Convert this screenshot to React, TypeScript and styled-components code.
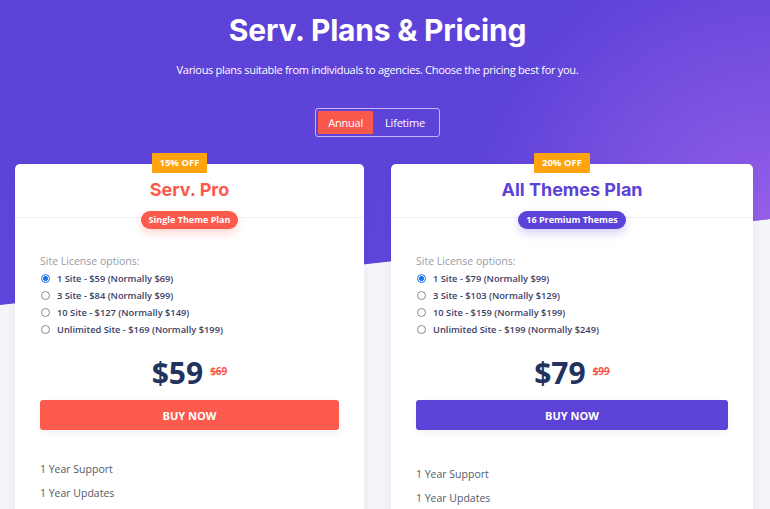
import styled, { createGlobalStyle } from "styled-components";

interface Plan {
  discount: string;
  title: string;
  tag: string;
  accent: string;
  width: number;
  options: string[];
  price: string;
  oldPrice: string;
  featuresOffset: number;
}

const plans: Plan[] = [
  {
    discount: "15% OFF",
    title: "Serv. Pro",
    tag: "Single Theme Plan",
    accent: "#fd5a4e",
    width: 349,
    options: [
      "1 Site - $59 (Normally $69)",
      "3 Site - $84 (Normally $99)",
      "10 Site - $127 (Normally $149)",
      "Unlimited Site - $169 (Normally $199)",
    ],
    price: "$59",
    oldPrice: "$69",
    featuresOffset: 0,
  },
  {
    discount: "20% OFF",
    title: "All Themes Plan",
    tag: "16 Premium Themes",
    accent: "#5c42d6",
    width: 362,
    options: [
      "1 Site - $79 (Normally $99)",
      "3 Site - $103 (Normally $129)",
      "10 Site - $159 (Normally $199)",
      "Unlimited Site - $199 (Normally $249)",
    ],
    price: "$79",
    oldPrice: "$99",
    featuresOffset: 5,
  },
];

const GlobalStyle = createGlobalStyle`
  body {
    margin: 0;
    background: #f4f5f9;
    font-family: "Open Sans", "Liberation Sans", sans-serif;
  }
`;

const App = () => {
  return (
    <>
      <GlobalStyle />
      <Page>
        <Hero>
          <Title>Serv. Plans &amp; Pricing</Title>
          <Subtitle>
            Various plans suitable from individuals to agencies. Choose the
            pricing best for you.
          </Subtitle>
          <Toggle>
            <ToggleOption $active>Annual</ToggleOption>
            <ToggleOption>Lifetime</ToggleOption>
          </Toggle>
        </Hero>
        <Cards>
          {plans.map((plan) => (
            <Card key={plan.title} $width={plan.width}>
              <Discount>{plan.discount}</Discount>
              <CardHead>
                <PlanTitle $color={plan.accent}>{plan.title}</PlanTitle>
              </CardHead>
              <Tag $color={plan.accent}>{plan.tag}</Tag>
              <CardBody>
                <OptionsLabel>Site License options:</OptionsLabel>
                <Options>
                  {plan.options.map((opt, i) => (
                    <Option key={opt}>
                      <Radio $checked={i === 0} />
                      {opt}
                    </Option>
                  ))}
                </Options>
                <PriceRow>
                  <Price>{plan.price}</Price>
                  <OldPrice>{plan.oldPrice}</OldPrice>
                </PriceRow>
                <BuyButton $color={plan.accent}>BUY NOW</BuyButton>
                <Features $offset={plan.featuresOffset}>
                  <li>1 Year Support</li>
                  <li>1 Year Updates</li>
                </Features>
              </CardBody>
            </Card>
          ))}
        </Cards>
      </Page>
    </>
  );
};

const Page = styled.div`
  position: relative;
  height: 509px;
  overflow: hidden;

  &::before {
    content: "";
    position: absolute;
    inset: 0;
    background:
      radial-gradient(circle at 100% 45%, rgba(160, 100, 235, 0.85) 0%, rgba(160, 100, 235, 0) 36%),
      linear-gradient(180deg, #5d42d8 0%, #6047db 100%);
    clip-path: polygon(0 0, 100% 0, 100% 219px, 0 305px);
  }
`;

const Hero = styled.header`
  position: relative;
  display: flex;
  flex-direction: column;
  align-items: center;
  padding: 11px 15px 0 0;
  color: #fff;
`;

const Title = styled.h1`
  margin: 0;
  font-family: "Inter", "Open Sans", sans-serif;
  font-size: 30px;
  font-weight: 700;
  line-height: 38px;
  letter-spacing: -0.2px;
`;

const Subtitle = styled.p`
  margin: 13px 0 0;
  font-size: 11px;
  line-height: 16px;
  letter-spacing: -0.3px;
`;

const Toggle = styled.div`
  display: flex;
  margin-top: 30px;
  padding: 2px;
  border: 1px solid rgba(220, 210, 255, 0.8);
  border-radius: 3px;
`;

const ToggleOption = styled.span<{ $active?: boolean }>`
  display: flex;
  align-items: center;
  justify-content: center;
  height: 23px;
  padding: 0 ${(p) => (p.$active ? "10px" : "12px")};
  font-size: 11px;
  letter-spacing: -0.2px;
  background: ${(p) => (p.$active ? "#f9584d" : "transparent")};
  border-radius: 1px;
`;

const Cards = styled.div`
  position: relative;
  display: flex;
  gap: 27px;
  padding-left: 15px;
  margin-top: 27px;
`;

const Card = styled.section<{ $width: number }>`
  position: relative;
  width: ${(p) => p.$width}px;
  height: 380px;
  background: #fff;
  border-radius: 5px;
  box-shadow: 0 2px 10px rgba(40, 30, 90, 0.06);
  display: flex;
  flex-direction: column;
  align-items: center;
`;

const Discount = styled.span`
  position: absolute;
  top: -11px;
  left: calc(50% - 38px);
  padding: 0 8px;
  height: 20px;
  line-height: 20px;
  background: #ffa30f;
  color: #fff;
  font-size: 9.5px;
  font-weight: 700;
  border-radius: 1px;
`;

const CardHead = styled.div`
  align-self: stretch;
  height: 54px;
  border-bottom: 1px solid #f1f1f5;
  display: flex;
  justify-content: center;
  padding-top: 13px;
  box-sizing: border-box;
`;

const PlanTitle = styled.h2<{ $color: string }>`
  margin: 0;
  font-family: "Inter", "Open Sans", sans-serif;
  font-size: 18px;
  line-height: 26px;
  font-weight: 700;
  color: ${(p) => p.$color};
`;

const Tag = styled.span<{ $color: string }>`
  margin-top: -7px;
  height: 18px;
  line-height: 18px;
  padding: 0 8px;
  border-radius: 9px;
  background: ${(p) => p.$color};
  color: #fff;
  font-size: 9px;
  font-weight: 700;
  box-shadow: 0 4px 10px ${(p) => p.$color}44;
`;

const CardBody = styled.div`
  align-self: stretch;
  padding: 25px 25px 0;
  display: flex;
  flex-direction: column;
`;

const OptionsLabel = styled.div`
  font-size: 10.5px;
  line-height: 14px;
  color: #9a9ca8;
`;

const Options = styled.ul`
  list-style: none;
  margin: 2px 0 0;
  padding: 0;
`;

const Option = styled.li`
  display: flex;
  align-items: center;
  height: 17px;
  font-size: 9.3px;
  font-weight: 600;
  color: #3c4066;
`;

const Radio = styled.span<{ $checked?: boolean }>`
  box-sizing: border-box;
  width: 9px;
  height: 9px;
  margin: 0 7px 0 1px;
  border-radius: 50%;
  border: 1px solid ${(p) => (p.$checked ? "#1a73e8" : "#8a8a8a")};
  background: ${(p) =>
    p.$checked ? "radial-gradient(circle, #1a73e8 0 2.2px, #fff 2.6px)" : "#fff"};
`;

const PriceRow = styled.div`
  display: flex;
  justify-content: center;
  align-items: flex-start;
  gap: 7px;
  margin-top: 16px;
`;

const Price = styled.span`
  font-size: 30px;
  line-height: 38px;
  font-weight: 700;
  color: #23335f;
`;

const OldPrice = styled.span`
  margin-top: 10px;
  font-size: 10px;
  font-weight: 700;
  color: #f7584c;
  text-decoration: line-through;
`;

const BuyButton = styled.button<{ $color: string }>`
  margin-top: 8px;
  height: 30px;
  border: none;
  border-radius: 3px;
  background: ${(p) => p.$color};
  color: #fff;
  font-family: inherit;
  font-size: 11px;
  font-weight: 700;
  box-shadow: 0 3px 8px rgba(0, 0, 0, 0.06);
`;

const Features = styled.ul<{ $offset: number }>`
  list-style: none;
  margin: ${(p) => 30 + p.$offset}px 0 0;
  padding: 0;
  font-size: 10.5px;
  color: #555a66;

  li {
    height: 24px;
    line-height: 18px;
  }
`;

export default App;
